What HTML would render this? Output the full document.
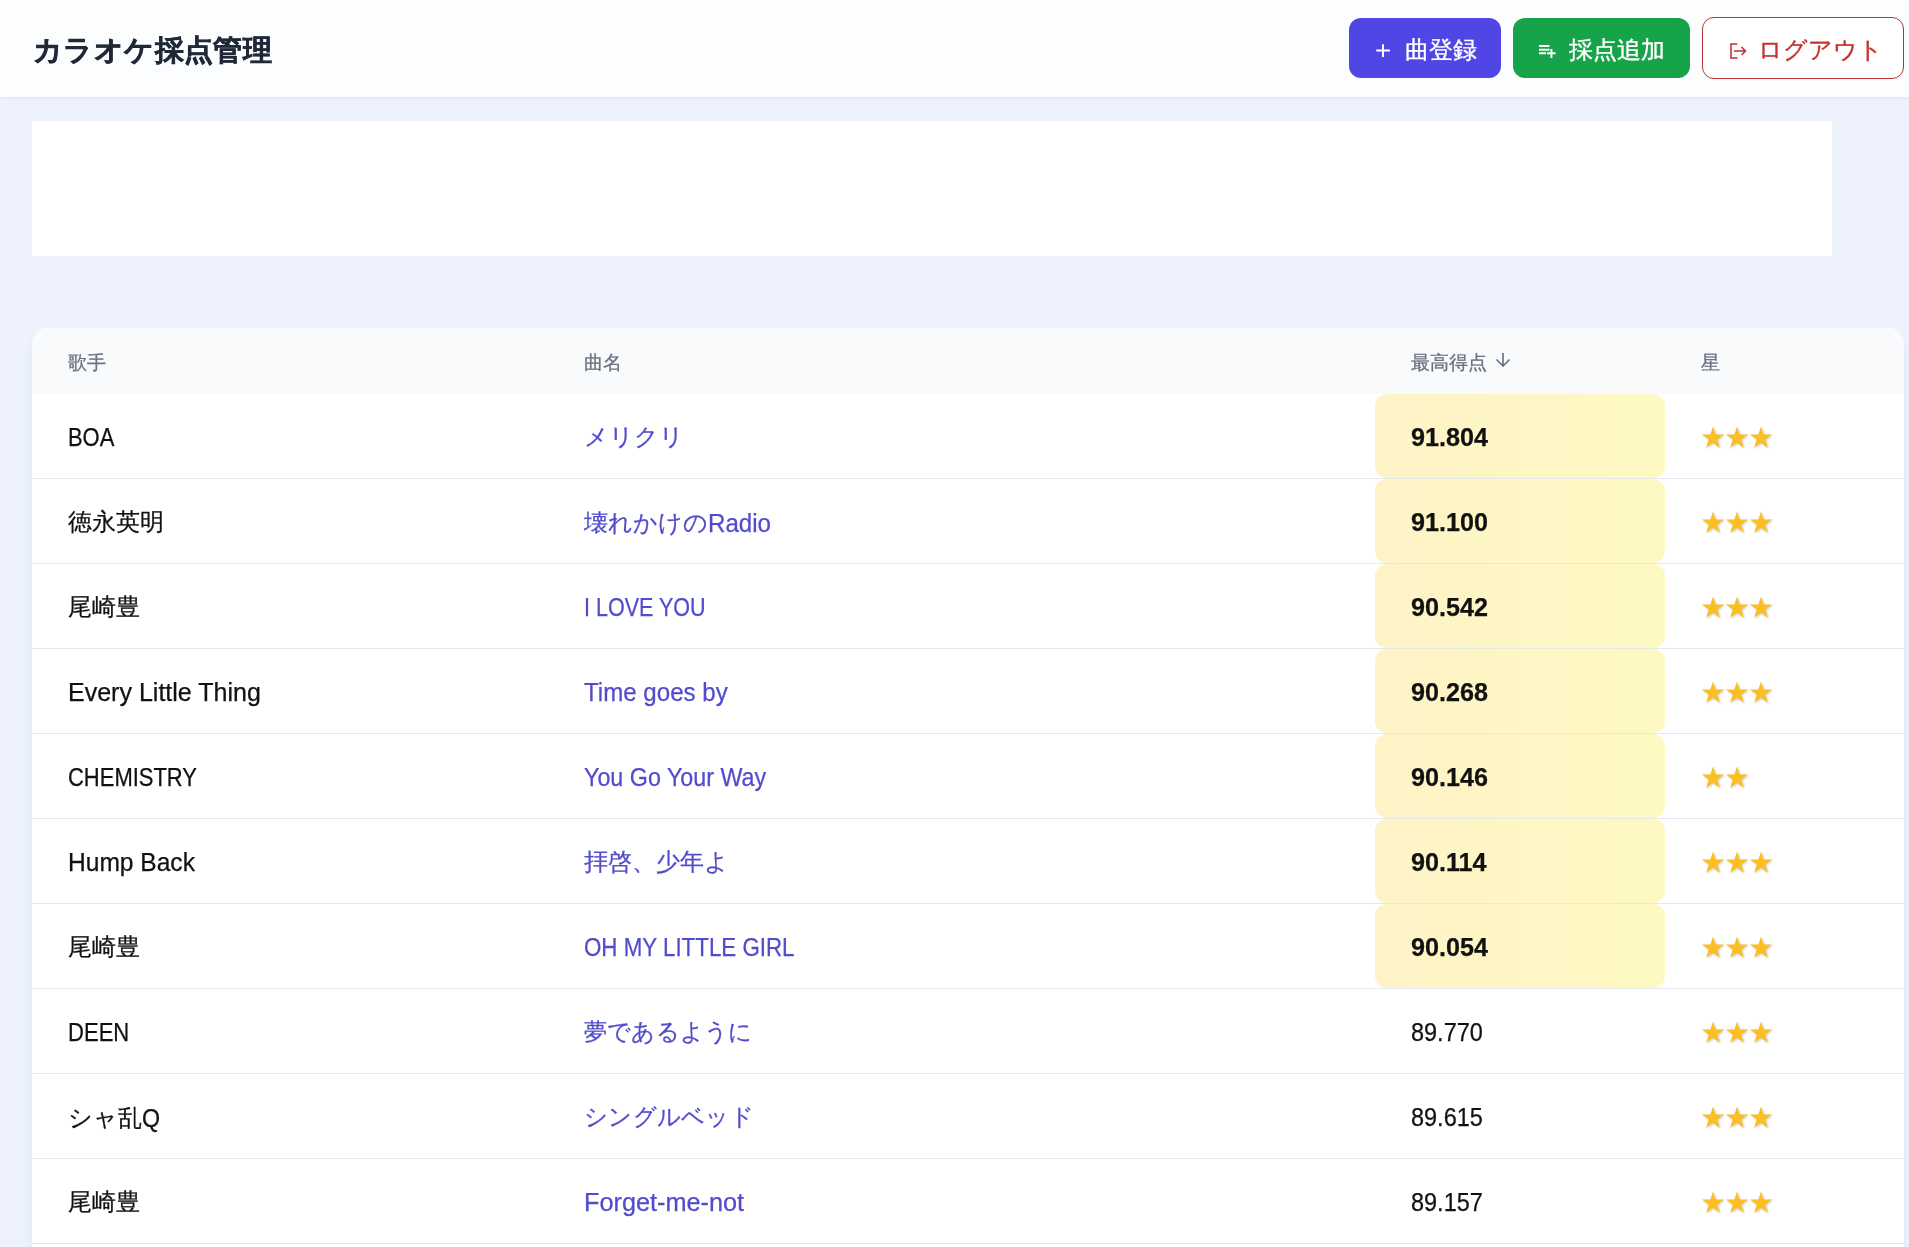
<!DOCTYPE html>
<html lang="ja">
<head>
<meta charset="utf-8">
<title>カラオケ採点管理</title>
<style>
*{box-sizing:border-box;margin:0;padding:0}
html,body{width:1909px;height:1247px;overflow:hidden}
body{font-family:"Liberation Sans",sans-serif;background:#edf2fd;color:#111;position:relative}
.hdr{will-change:transform;position:absolute;left:0;top:0;width:1909px;height:97px;background:#fcfdff;box-shadow:0 1px 3px rgba(0,0,0,.07);z-index:2}
.title{position:absolute;left:33px;top:35px;font-size:29px;line-height:30px;font-weight:bold;letter-spacing:.4px;color:#1f2937;white-space:nowrap;-webkit-text-stroke:0.5px #1f2937}
.btn{position:absolute;top:18px;height:60px;border-radius:12px;color:#fff;white-space:nowrap}
.btn .ic{position:absolute}
.btn .bt{position:absolute;top:20px;font-size:24px;line-height:24px;-webkit-text-stroke:.35px currentColor}
.b1{left:1349px;width:152px;background:#4f46e5}
.b2{left:1513px;width:177px;background:#16a34a}
.b3{left:1702px;top:17px;height:62px;width:202px;background:#fff;border:1px solid #b83232;color:#c53030}
.b3 .bt{top:20px}
.ad{position:absolute;left:32px;top:121px;width:1800px;height:135px;background:#fff}
.card{will-change:transform;position:absolute;left:32px;top:328px;width:1872px;height:1000px;background:#fff;border-radius:16px;overflow:hidden;box-shadow:0 8px 12px -2px rgba(50,60,140,.10)}
.th{position:absolute;left:0;top:0;width:100%;height:66px;background:#f8fafc}
.th span{position:absolute;top:26px;font-size:18.5px;line-height:18px;color:#6b7280;-webkit-text-stroke:0.3px #6b7280}
.row{position:absolute;left:0;width:100%;height:85px;border-bottom:1px solid #e5e7eb}
.t{position:absolute;white-space:nowrap;font-size:24px;line-height:24px;top:31px;-webkit-text-stroke:.25px currentColor}
.t.L{font-size:25px;top:31px}
.lt{font-size:25px;position:relative;top:1px;display:inline-block;transform-origin:0 0;transform:scaleX(.965)}
.c1{left:36px;color:#111}
.c2{left:552px;color:#524ccc}
.c3{left:1379px;color:#111;font-size:25.5px;top:31px}
.c3.b{font-weight:bold;transform-origin:0 0;transform:scaleX(.987)}
.c3.n{transform-origin:0 0;transform:scaleX(.9205)}
.c4{left:1668px;color:#fbbf24;font-size:24.6px;text-shadow:1px 1px 2px rgba(0,0,0,.18)}
.hl{position:absolute;left:1343px;top:0;width:290px;height:84px;border-radius:12px;background:linear-gradient(90deg,#fef3c7,#fef9c3)}

.sx{display:inline-block;transform-origin:0 0}
.c4s{position:absolute;left:1669px;top:32px;fill:#fbbf24;filter:drop-shadow(1px 1px 1px rgba(0,0,0,.2))}

</style>
</head>
<body>
<div class="hdr">
  <div class="title">カラオケ採点管理</div>
  <div class="btn b1"><svg class="ic" style="left:26px;top:25px" width="16" height="16" viewBox="0 0 16 16"><path d="M8 1.3v12.7M1.3 7.5h13.7" stroke="#fff" stroke-width="2" fill="none"/></svg><span class="bt" style="left:56px">曲登録</span></div>
  <div class="btn b2"><svg class="ic" style="left:24px;top:20px" width="22" height="20" viewBox="0 0 22 20"><path d="M2 8h10.5M2 11.7h10.5M2 15.3h7M10 15.3h8.5M14.4 11v9" stroke="#fff" stroke-width="2" fill="none"/></svg><span class="bt" style="left:56px">採点追加</span></div>
  <div class="btn b3"><svg class="ic" style="left:20px;top:20px" width="26" height="22" viewBox="0 0 26 22"><path d="M14.5 6h-6.5v14h6.5M11 13h11.5M18.5 9l4 4-4 4" stroke="#c53030" stroke-width="1.6" fill="none" stroke-linejoin="miter"/></svg><span class="bt" style="left:55px">ログアウト</span></div>
</div>
<div class="ad"></div>
<div class="card">
  <div class="th">
    <span style="left:36px">歌手</span>
    <span style="left:552px">曲名</span>
    <span style="left:1379px">最高得点</span>
    <svg style="position:absolute;left:1463px;top:24px" width="16" height="16" viewBox="0 0 16 16"><path d="M8 1v13M1.5 7.5 8 14l6.5-6.5" stroke="#6b7280" stroke-width="1.7" fill="none"/></svg>
    <span style="left:1669px">星</span>
  </div>
  <div class="row" style="top:66px"><div class="hl"></div><div class="t c1 L"><span class='sx' style='transform:scaleX(0.8769)'>BOA</span></div><div class="t c2 J">メリクリ</div><div class="t c3 b">91.804</div><svg class="c4s" width="74" height="26" viewBox="0 0 74 26"><polygon transform="translate(0,0)" points="12.00,0.53 14.62,8.59 23.10,8.59 16.24,13.58 18.86,21.64 12.00,16.66 5.14,21.64 7.76,13.58 0.90,8.59 9.38,8.59"/><polygon transform="translate(24,0)" points="12.00,0.53 14.62,8.59 23.10,8.59 16.24,13.58 18.86,21.64 12.00,16.66 5.14,21.64 7.76,13.58 0.90,8.59 9.38,8.59"/><polygon transform="translate(48,0)" points="12.00,0.53 14.62,8.59 23.10,8.59 16.24,13.58 18.86,21.64 12.00,16.66 5.14,21.64 7.76,13.58 0.90,8.59 9.38,8.59"/></svg></div><div class="row" style="top:151px"><div class="hl"></div><div class="t c1 J">徳永英明</div><div class="t c2 J">壊れかけの<span class='lt'>Radio</span></div><div class="t c3 b">91.100</div><svg class="c4s" width="74" height="26" viewBox="0 0 74 26"><polygon transform="translate(0,0)" points="12.00,0.53 14.62,8.59 23.10,8.59 16.24,13.58 18.86,21.64 12.00,16.66 5.14,21.64 7.76,13.58 0.90,8.59 9.38,8.59"/><polygon transform="translate(24,0)" points="12.00,0.53 14.62,8.59 23.10,8.59 16.24,13.58 18.86,21.64 12.00,16.66 5.14,21.64 7.76,13.58 0.90,8.59 9.38,8.59"/><polygon transform="translate(48,0)" points="12.00,0.53 14.62,8.59 23.10,8.59 16.24,13.58 18.86,21.64 12.00,16.66 5.14,21.64 7.76,13.58 0.90,8.59 9.38,8.59"/></svg></div><div class="row" style="top:236px"><div class="hl"></div><div class="t c1 J">尾崎豊</div><div class="t c2 L"><span class='sx' style='transform:scaleX(0.8609)'>I LOVE YOU</span></div><div class="t c3 b">90.542</div><svg class="c4s" width="74" height="26" viewBox="0 0 74 26"><polygon transform="translate(0,0)" points="12.00,0.53 14.62,8.59 23.10,8.59 16.24,13.58 18.86,21.64 12.00,16.66 5.14,21.64 7.76,13.58 0.90,8.59 9.38,8.59"/><polygon transform="translate(24,0)" points="12.00,0.53 14.62,8.59 23.10,8.59 16.24,13.58 18.86,21.64 12.00,16.66 5.14,21.64 7.76,13.58 0.90,8.59 9.38,8.59"/><polygon transform="translate(48,0)" points="12.00,0.53 14.62,8.59 23.10,8.59 16.24,13.58 18.86,21.64 12.00,16.66 5.14,21.64 7.76,13.58 0.90,8.59 9.38,8.59"/></svg></div><div class="row" style="top:321px"><div class="hl"></div><div class="t c1 L"><span class='sx' style='transform:scaleX(1.001)'>Every Little Thing</span></div><div class="t c2 L"><span class='sx' style='transform:scaleX(0.964)'>Time goes by</span></div><div class="t c3 b">90.268</div><svg class="c4s" width="74" height="26" viewBox="0 0 74 26"><polygon transform="translate(0,0)" points="12.00,0.53 14.62,8.59 23.10,8.59 16.24,13.58 18.86,21.64 12.00,16.66 5.14,21.64 7.76,13.58 0.90,8.59 9.38,8.59"/><polygon transform="translate(24,0)" points="12.00,0.53 14.62,8.59 23.10,8.59 16.24,13.58 18.86,21.64 12.00,16.66 5.14,21.64 7.76,13.58 0.90,8.59 9.38,8.59"/><polygon transform="translate(48,0)" points="12.00,0.53 14.62,8.59 23.10,8.59 16.24,13.58 18.86,21.64 12.00,16.66 5.14,21.64 7.76,13.58 0.90,8.59 9.38,8.59"/></svg></div><div class="row" style="top:406px"><div class="hl"></div><div class="t c1 L"><span class='sx' style='transform:scaleX(0.8788)'>CHEMISTRY</span></div><div class="t c2 L"><span class='sx' style='transform:scaleX(0.9321)'>You Go Your Way</span></div><div class="t c3 b">90.146</div><svg class="c4s" width="50" height="26" viewBox="0 0 50 26"><polygon transform="translate(0,0)" points="12.00,0.53 14.62,8.59 23.10,8.59 16.24,13.58 18.86,21.64 12.00,16.66 5.14,21.64 7.76,13.58 0.90,8.59 9.38,8.59"/><polygon transform="translate(24,0)" points="12.00,0.53 14.62,8.59 23.10,8.59 16.24,13.58 18.86,21.64 12.00,16.66 5.14,21.64 7.76,13.58 0.90,8.59 9.38,8.59"/></svg></div><div class="row" style="top:491px"><div class="hl"></div><div class="t c1 L"><span class='sx' style='transform:scaleX(0.9822)'>Hump Back</span></div><div class="t c2 J">拝啓、少年よ</div><div class="t c3 b">90.114</div><svg class="c4s" width="74" height="26" viewBox="0 0 74 26"><polygon transform="translate(0,0)" points="12.00,0.53 14.62,8.59 23.10,8.59 16.24,13.58 18.86,21.64 12.00,16.66 5.14,21.64 7.76,13.58 0.90,8.59 9.38,8.59"/><polygon transform="translate(24,0)" points="12.00,0.53 14.62,8.59 23.10,8.59 16.24,13.58 18.86,21.64 12.00,16.66 5.14,21.64 7.76,13.58 0.90,8.59 9.38,8.59"/><polygon transform="translate(48,0)" points="12.00,0.53 14.62,8.59 23.10,8.59 16.24,13.58 18.86,21.64 12.00,16.66 5.14,21.64 7.76,13.58 0.90,8.59 9.38,8.59"/></svg></div><div class="row" style="top:576px"><div class="hl"></div><div class="t c1 J">尾崎豊</div><div class="t c2 L"><span class='sx' style='transform:scaleX(0.8932)'>OH MY LITTLE GIRL</span></div><div class="t c3 b">90.054</div><svg class="c4s" width="74" height="26" viewBox="0 0 74 26"><polygon transform="translate(0,0)" points="12.00,0.53 14.62,8.59 23.10,8.59 16.24,13.58 18.86,21.64 12.00,16.66 5.14,21.64 7.76,13.58 0.90,8.59 9.38,8.59"/><polygon transform="translate(24,0)" points="12.00,0.53 14.62,8.59 23.10,8.59 16.24,13.58 18.86,21.64 12.00,16.66 5.14,21.64 7.76,13.58 0.90,8.59 9.38,8.59"/><polygon transform="translate(48,0)" points="12.00,0.53 14.62,8.59 23.10,8.59 16.24,13.58 18.86,21.64 12.00,16.66 5.14,21.64 7.76,13.58 0.90,8.59 9.38,8.59"/></svg></div><div class="row" style="top:661px"><div class="t c1 L"><span class='sx' style='transform:scaleX(0.8821)'>DEEN</span></div><div class="t c2 J"><span class='sx' style='transform:scaleX(0.967)'>夢であるように</span></div><div class="t c3 n">89.770</div><svg class="c4s" width="74" height="26" viewBox="0 0 74 26"><polygon transform="translate(0,0)" points="12.00,0.53 14.62,8.59 23.10,8.59 16.24,13.58 18.86,21.64 12.00,16.66 5.14,21.64 7.76,13.58 0.90,8.59 9.38,8.59"/><polygon transform="translate(24,0)" points="12.00,0.53 14.62,8.59 23.10,8.59 16.24,13.58 18.86,21.64 12.00,16.66 5.14,21.64 7.76,13.58 0.90,8.59 9.38,8.59"/><polygon transform="translate(48,0)" points="12.00,0.53 14.62,8.59 23.10,8.59 16.24,13.58 18.86,21.64 12.00,16.66 5.14,21.64 7.76,13.58 0.90,8.59 9.38,8.59"/></svg></div><div class="row" style="top:746px"><div class="t c1 J">シャ乱<span class='lt' style='transform:scaleX(.93)'>Q</span></div><div class="t c2 J"><span class='sx' style='transform:scaleX(0.97)'>シングルベッド</span></div><div class="t c3 n">89.615</div><svg class="c4s" width="74" height="26" viewBox="0 0 74 26"><polygon transform="translate(0,0)" points="12.00,0.53 14.62,8.59 23.10,8.59 16.24,13.58 18.86,21.64 12.00,16.66 5.14,21.64 7.76,13.58 0.90,8.59 9.38,8.59"/><polygon transform="translate(24,0)" points="12.00,0.53 14.62,8.59 23.10,8.59 16.24,13.58 18.86,21.64 12.00,16.66 5.14,21.64 7.76,13.58 0.90,8.59 9.38,8.59"/><polygon transform="translate(48,0)" points="12.00,0.53 14.62,8.59 23.10,8.59 16.24,13.58 18.86,21.64 12.00,16.66 5.14,21.64 7.76,13.58 0.90,8.59 9.38,8.59"/></svg></div><div class="row" style="top:831px"><div class="t c1 J">尾崎豊</div><div class="t c2 L"><span class='sx' style='transform:scaleX(1.0108)'>Forget-me-not</span></div><div class="t c3 n">89.157</div><svg class="c4s" width="74" height="26" viewBox="0 0 74 26"><polygon transform="translate(0,0)" points="12.00,0.53 14.62,8.59 23.10,8.59 16.24,13.58 18.86,21.64 12.00,16.66 5.14,21.64 7.76,13.58 0.90,8.59 9.38,8.59"/><polygon transform="translate(24,0)" points="12.00,0.53 14.62,8.59 23.10,8.59 16.24,13.58 18.86,21.64 12.00,16.66 5.14,21.64 7.76,13.58 0.90,8.59 9.38,8.59"/><polygon transform="translate(48,0)" points="12.00,0.53 14.62,8.59 23.10,8.59 16.24,13.58 18.86,21.64 12.00,16.66 5.14,21.64 7.76,13.58 0.90,8.59 9.38,8.59"/></svg></div>
</div>
</body>
</html>
